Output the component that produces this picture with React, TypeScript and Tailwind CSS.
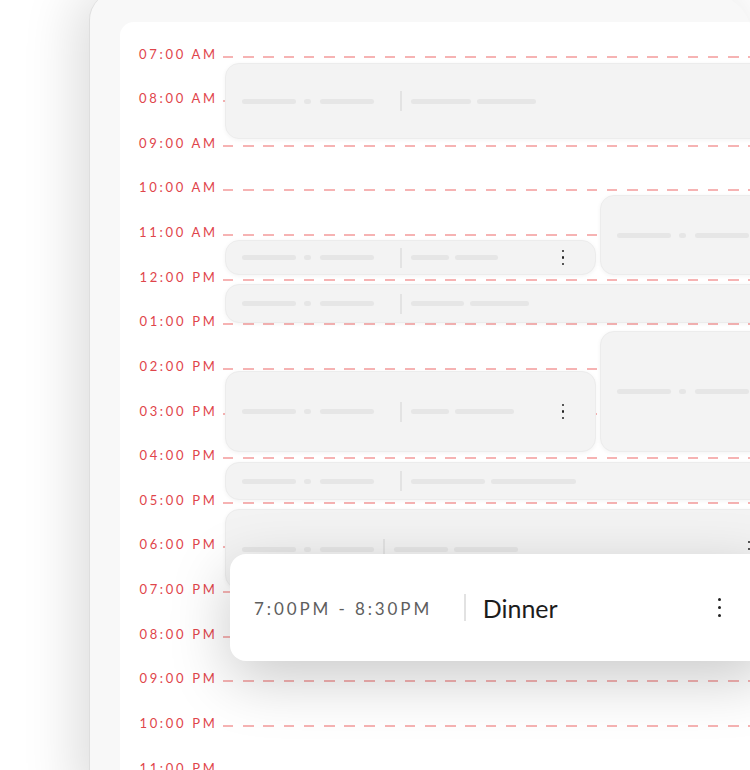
import React from "react";

const hours = [
  "07:00 AM", "08:00 AM", "09:00 AM", "10:00 AM", "11:00 AM", "12:00 PM",
  "01:00 PM", "02:00 PM", "03:00 PM", "04:00 PM", "05:00 PM", "06:00 PM",
  "07:00 PM", "08:00 PM", "09:00 PM", "10:00 PM", "11:00 PM",
];

function Bar({ w }: { w: number }) {
  return <div className="h-[5px] shrink-0 rounded-full bg-[#e6e6e6]" style={{ width: w }} />;
}

function TimeBars() {
  return (
    <div className="flex items-center">
      <Bar w={54} />
      <div className="ml-[8px]"><Bar w={7} /></div>
      <div className="ml-[9px]"><Bar w={54} /></div>
    </div>
  );
}

function Kebab({ small = true }: { small?: boolean }) {
  return small ? (
    <div className="flex flex-col items-center gap-[4.5px]">
      <span className="block h-[2.2px] w-[2.2px] rounded-full bg-[#222]" />
      <span className="block h-[2.2px] w-[2.2px] rounded-full bg-[#222]" />
      <span className="block h-[2.2px] w-[2.2px] rounded-full bg-[#222]" />
    </div>
  ) : (
    <div className="flex flex-col items-center gap-[5px]">
      <span className="block h-[3px] w-[3px] rounded-full bg-[#222]" />
      <span className="block h-[3px] w-[3px] rounded-full bg-[#222]" />
      <span className="block h-[3px] w-[3px] rounded-full bg-[#222]" />
    </div>
  );
}

type EvProps = {
  top: number;
  left: number;
  width: number;
  height: number;
  children?: React.ReactNode;
};

function EventCard({ top, left, width, height, children }: EvProps) {
  return (
    <div
      className="absolute flex items-center rounded-[14px] border border-[#ececec] bg-[#f3f3f3] pl-[16px] shadow-[0_1px_4px_rgba(0,0,0,0.05)]"
      style={{ top, left, width, height }}
    >
      {children}
    </div>
  );
}

function LeftContent({ a, b, kebab, dividerGap = 26 }: { a: number; b: number; kebab?: boolean; dividerGap?: number }) {
  return (
    <>
      <TimeBars />
      <div className="h-[20px] w-[1.5px] shrink-0 bg-[#e3e3e3]" style={{ marginLeft: dividerGap }} />
      <div className="ml-[9px] flex items-center gap-[6px]">
        <Bar w={a} />
        <Bar w={b} />
      </div>
      {kebab && (
        <div className="ml-auto mr-[31px]">
          <Kebab />
        </div>
      )}
    </>
  );
}

export default function App() {
  return (
    <div className="relative h-[770px] w-[750px] overflow-hidden bg-white" style={{ fontFamily: "Lato, 'Open Sans', sans-serif" }}>
      <div className="ml-[89px] mt-[-8px] h-[810px] w-[664px] overflow-hidden rounded-tl-[28px] rounded-tr-[48px] border-l border-[#dedede] bg-[#f8f8f8] pl-[30px] pt-[30px] shadow-[-12px_0_55px_rgba(0,0,0,0.14)]">
        <div className="relative h-full rounded-tl-[14px] bg-white pt-[7.7px]">
          {hours.map((h) => (
            <div key={h} className="flex h-[44.625px] items-center">
              <div className="ml-[14px] mt-[4px] w-[89px] shrink-0 text-center text-[13px] leading-none tracking-[2.7px] text-[#df454b]">
                {h}
              </div>
              <div className="mt-[9px] h-[2px] flex-1 bg-[repeating-linear-gradient(90deg,#f6b3b3_0px,#f6b3b3_10.5px,transparent_10.5px,transparent_20.2px)]" />
            </div>
          ))}

          <EventCard top={41} left={105} width={560} height={76}>
            <LeftContent a={60} b={59} />
          </EventCard>
          <EventCard top={173} left={480} width={200} height={80}>
            <TimeBars />
          </EventCard>
          <EventCard top={218} left={105} width={371} height={35}>
            <LeftContent a={38} b={43} kebab />
          </EventCard>
          <EventCard top={262} left={105} width={560} height={39}>
            <LeftContent a={53} b={59} />
          </EventCard>
          <EventCard top={309} left={480} width={200} height={121}>
            <TimeBars />
          </EventCard>
          <EventCard top={349} left={105} width={371} height={81}>
            <LeftContent a={38} b={59} kebab />
          </EventCard>
          <EventCard top={440} left={105} width={560} height={38}>
            <LeftContent a={74} b={85} />
          </EventCard>
          <EventCard top={487} left={105} width={560} height={80}>
            <LeftContent a={54} b={64} dividerGap={9} />
            <div className="absolute left-[522px] top-[31px]">
              <Kebab />
            </div>
          </EventCard>

          <div className="absolute left-[110px] top-[532px] flex h-[107px] w-[540px] items-center rounded-[16px] bg-white pl-[24px] shadow-[0_18px_60px_rgba(0,0,0,0.21)]">
            <span className="mt-[2px] text-[17px] leading-none tracking-[2.9px] text-[#5e5e5e]">7:00PM - 8:30PM</span>
            <div className="ml-[32px] h-[27px] w-[1.5px] bg-[#e2e2e2]" />
            <span className="ml-[17px] mt-[2px] text-[25px] leading-none text-[#1c1c1c]">Dinner</span>
            <div className="ml-auto mr-[49px]">
              <Kebab small={false} />
            </div>
          </div>
        </div>
      </div>
    </div>
  );
}
